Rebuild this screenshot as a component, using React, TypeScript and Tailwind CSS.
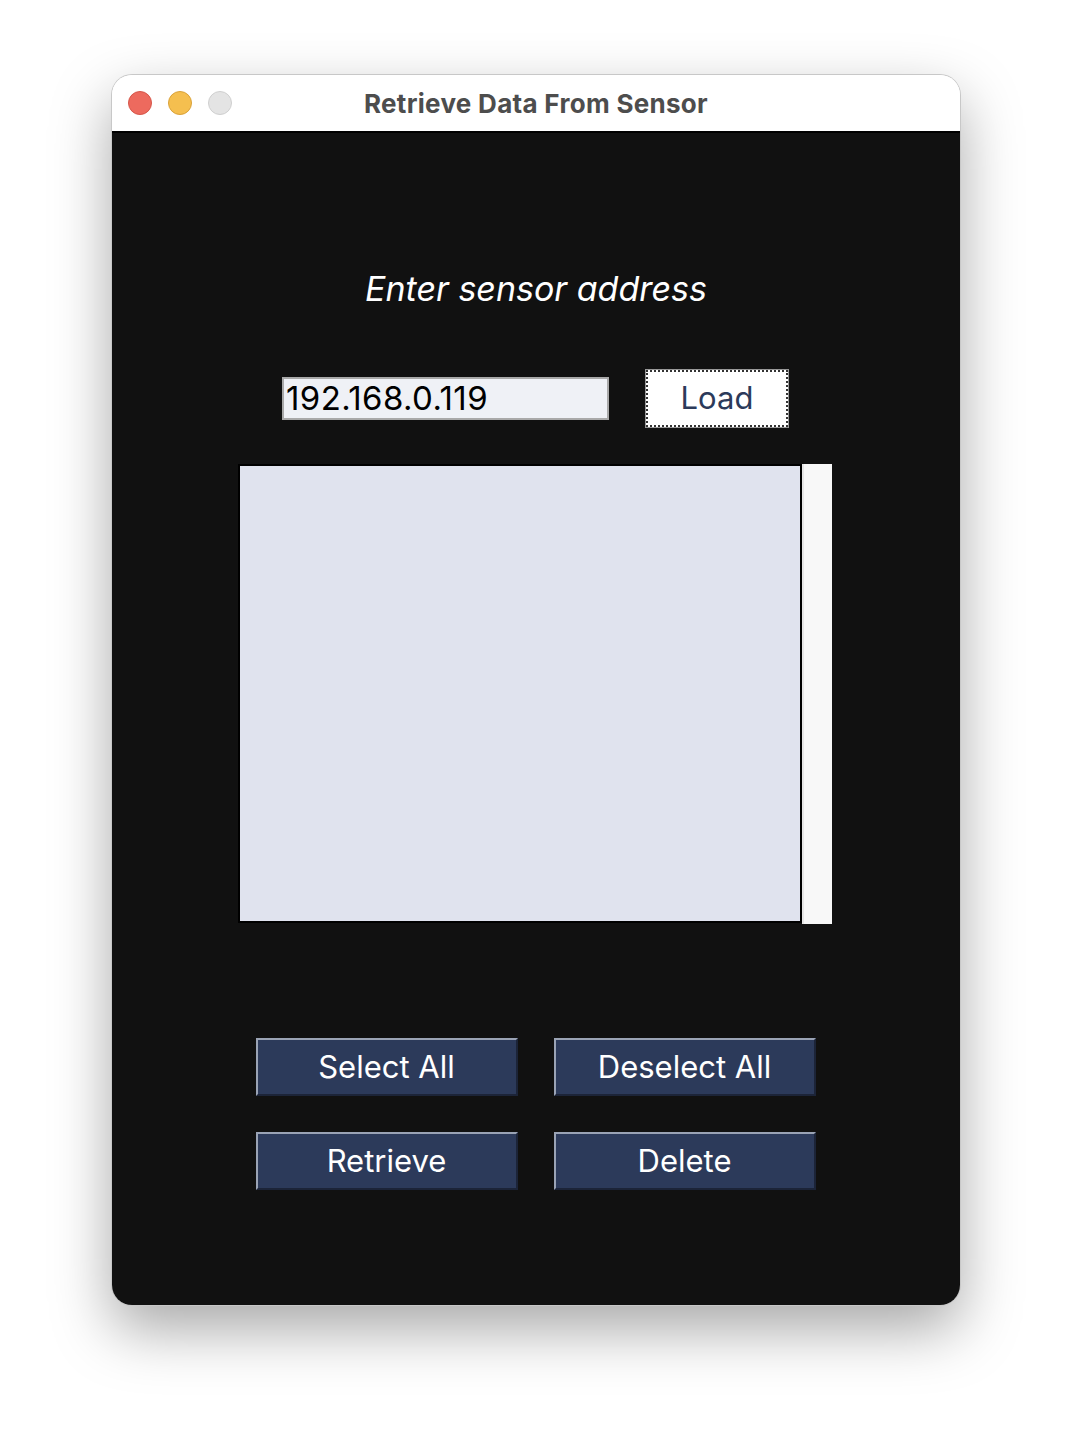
import React from 'react'

const font = { fontFamily: 'Inter, "Open Sans", "Liberation Sans", sans-serif' }

function NavyButton({ label }: { label: string }) {
  return (
    <button className='w-[262px] h-[58px] bg-[#2c3a5a] text-white text-[31px] border-t-2 border-l-2 border-t-[#9aa3b5] border-l-[#9aa3b5] border-b-2 border-r-2 border-b-[#1c2438] border-r-[#1c2438] flex items-center justify-center'>
      {label}
    </button>
  )
}

export default function App() {
  return (
    <div className='w-[1072px] h-[1454px] bg-white flex justify-center pt-[75px]' style={font}>
      <div className='w-[848px] h-[1230px] rounded-[20px] overflow-hidden flex flex-col shadow-[0_24px_60px_rgba(0,0,0,0.35)] ring-1 ring-[#c8c8c8]'>
        {/* title bar */}
        <div className='h-[58px] bg-white border-b-2 border-black flex items-center relative shrink-0'>
          <div className='flex gap-[16px] pl-[16px]'>
            <span className='w-[24px] h-[24px] rounded-full bg-[#ed6a5e] border border-[#d5564a]' />
            <span className='w-[24px] h-[24px] rounded-full bg-[#f5bf4f] border border-[#d9a23a]' />
            <span className='w-[24px] h-[24px] rounded-full bg-[#e4e4e4] border border-[#cfcfcf]' />
          </div>
          <span className='absolute inset-x-0 text-center text-[26px] font-bold text-[#4d4d4d] tracking-[0.3px]'>Retrieve Data From Sensor</span>
        </div>

        {/* content */}
        <div className='flex-1 bg-[#111111] flex flex-col items-center'>
          <p className='mt-[136px] h-[40px] leading-[40px] text-[34px] italic text-white'>Enter sensor address</p>

          <div className='mt-[61px] flex items-center gap-[37px] ml-[-2px]'>
            <div className='w-[327px] h-[43px] bg-[#eff1f6] border-2 border-[#a9a9a9] flex items-center pl-[2px] text-[33px] tracking-[0.4px] text-black'>192.168.0.119</div>
            <button className='w-[142px] h-[57px] bg-white border-2 border-dotted border-[#333] outline outline-1 outline-[#999] flex items-center justify-center text-[31px] text-[#2c3a5a]'>Load</button>
          </div>

          <div className='mt-[37px] flex ml-[-3px]'>
            <div className='w-[564px] h-[459px] bg-[#e0e3ee] border-2 border-black' />
            <div className='w-[30px] h-[460px] bg-[#f8f8f8] border-l-2 border-[#e6e6e6]' />
          </div>

          <div className='mt-[114px] grid grid-cols-2 gap-x-[36px] gap-y-[36px] ml-[-1px]'>
            <NavyButton label='Select All' />
            <NavyButton label='Deselect All' />
            <NavyButton label='Retrieve' />
            <NavyButton label='Delete' />
          </div>
        </div>
      </div>
    </div>
  )
}
